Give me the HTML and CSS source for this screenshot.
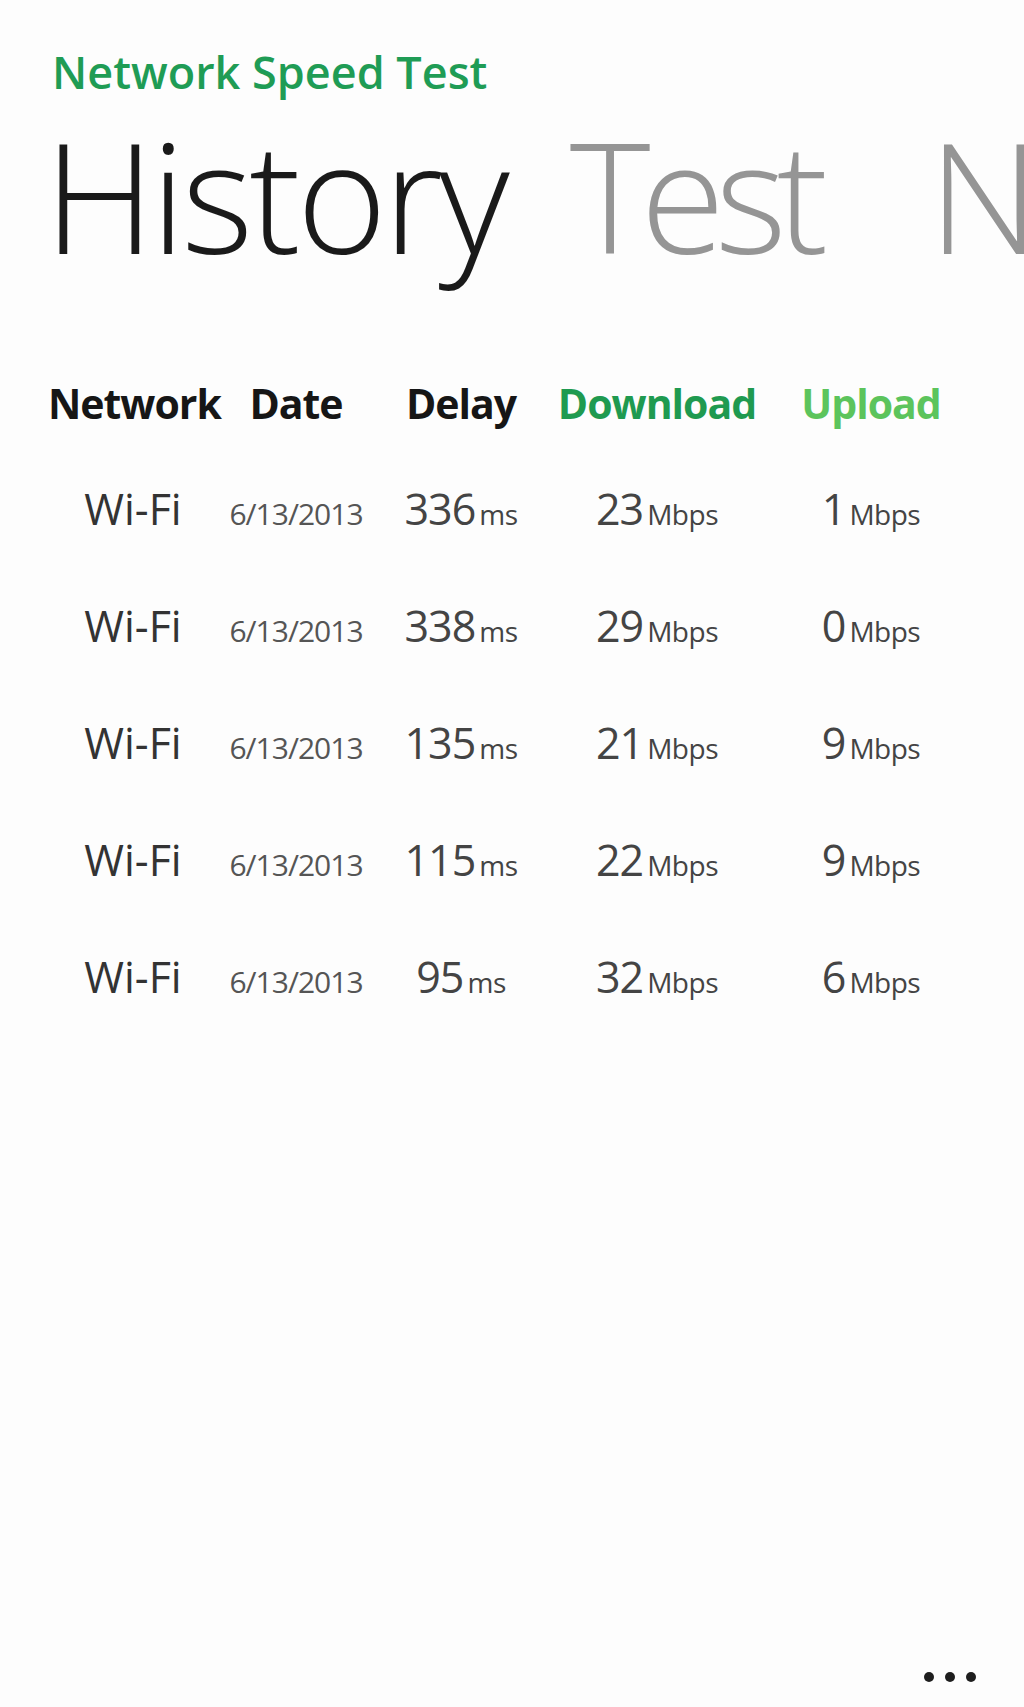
FILE: index.html
```html
<!DOCTYPE html>
<html lang="en">
<head>
    <meta charset="UTF-8">
    <meta name="viewport" content="width=device-width, initial-scale=1.0">
    <title>Network Speed Test</title>
    <link rel="stylesheet" href="styles.css">
</head>
<body>
    <div class="page">
        <div class="app-title">Network Speed Test</div>
        <div class="pivot">
            <span class="pivot-item active">History</span>
            <span class="pivot-item">Test</span>
            <span class="pivot-item">Network</span>
        </div>

        <div class="history">
            <div class="row head">
                <div>Network</div>
                <div>Date</div>
                <div>Delay</div>
                <div class="down">Download</div>
                <div class="up">Upload</div>
            </div>
            <div class="row">
                <div class="net">Wi-Fi</div>
                <div class="date">6/13/2013</div>
                <div class="val">336<span class="unit">ms</span></div>
                <div class="val">23<span class="unit">Mbps</span></div>
                <div class="val">1<span class="unit">Mbps</span></div>
            </div>
            <div class="row">
                <div class="net">Wi-Fi</div>
                <div class="date">6/13/2013</div>
                <div class="val">338<span class="unit">ms</span></div>
                <div class="val">29<span class="unit">Mbps</span></div>
                <div class="val">0<span class="unit">Mbps</span></div>
            </div>
            <div class="row">
                <div class="net">Wi-Fi</div>
                <div class="date">6/13/2013</div>
                <div class="val">135<span class="unit">ms</span></div>
                <div class="val">21<span class="unit">Mbps</span></div>
                <div class="val">9<span class="unit">Mbps</span></div>
            </div>
            <div class="row">
                <div class="net">Wi-Fi</div>
                <div class="date">6/13/2013</div>
                <div class="val">115<span class="unit">ms</span></div>
                <div class="val">22<span class="unit">Mbps</span></div>
                <div class="val">9<span class="unit">Mbps</span></div>
            </div>
            <div class="row">
                <div class="net">Wi-Fi</div>
                <div class="date">6/13/2013</div>
                <div class="val">95<span class="unit">ms</span></div>
                <div class="val">32<span class="unit">Mbps</span></div>
                <div class="val">6<span class="unit">Mbps</span></div>
            </div>
        </div>
    </div>

    <div class="app-bar">
        <span class="dot"></span>
        <span class="dot"></span>
        <span class="dot"></span>
    </div>
</body>
</html>
```

FILE: styles.css
```css
body {
    margin: 0;
    background-color: #fdfdfd;
    font-family: "Open Sans", "DejaVu Sans", sans-serif;
    color: #333;
}
.page {
    height: 1707px;
    overflow: hidden;
}
.app-title {
    margin: 47px 0 0 52px;
    font-size: 45px;
    font-weight: 600;
    line-height: 50px;
    color: #1f9c55;
}
.pivot {
    margin: 7px 0 0 44px;
    white-space: nowrap;
    font-size: 154px;
    font-weight: 300;
    line-height: 180px;
    letter-spacing: -4px;
}
.pivot-item {
    margin-right: 74px;
    color: #959595;
    letter-spacing: -10px;
}
.pivot-item.active {
    margin-right: 28px;
    color: #1a1a1a;
    letter-spacing: -4px;
}
.history {
    margin: 94px 0 0 48px;
}
.row {
    display: grid;
    grid-template-columns: 170px 156px 174px 218px 210px;
    align-items: baseline;
    height: 117px;
    text-align: center;
    font-size: 43px;
    line-height: 50px;
}
.row.head {
    height: 106px;
    font-size: 41px;
    font-weight: 700;
    color: #161616;
    letter-spacing: -1px;
}
.down {
    color: #1f9a50;
}
.up {
    color: #5cc45c;
}
.net {
    color: #333;
}
.date {
    font-size: 30px;
    color: #555;
    letter-spacing: -1px;
}
.val {
    color: #444;
    letter-spacing: -1px;
}
.unit {
    margin-left: 4px;
    font-size: 28px;
    letter-spacing: -0.5px;
}
.app-bar {
    position: absolute;
    right: 48px;
    bottom: 25px;
    display: flex;
    gap: 11px;
}
.dot {
    width: 10px;
    height: 10px;
    border-radius: 50%;
    background-color: #1e1e1e;
}
```
